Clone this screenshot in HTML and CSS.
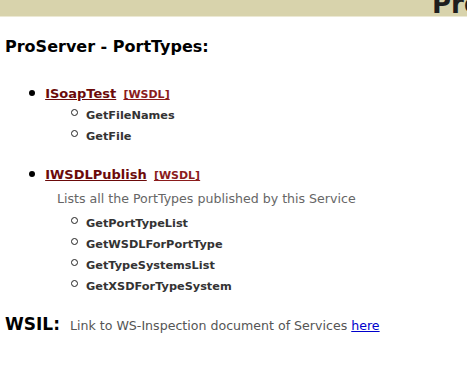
FILE: index.html
```html
<!DOCTYPE html>
<html lang="en">
<head>
    <meta charset="UTF-8">
    <title>ProServer - PortTypes</title>
    <link rel="stylesheet" href="styles.css">
</head>
<body>
    <header class="banner">
        <span class="banner-title">ProServer</span>
    </header>

    <main class="content">
        <h2 class="page-title">ProServer - PortTypes:</h2>

        <ul class="port-list">
            <li class="port">
                <a href="#" class="port-name">ISoapTest</a>
                <a href="#" class="wsdl-link">[WSDL]</a>
                <ul class="op-list">
                    <li>GetFileNames</li>
                    <li>GetFile</li>
                </ul>
            </li>
            <li class="port">
                <a href="#" class="port-name">IWSDLPublish</a>
                <a href="#" class="wsdl-link">[WSDL]</a>
                <div class="port-desc">Lists all the PortTypes published by this Service</div>
                <ul class="op-list">
                    <li>GetPortTypeList</li>
                    <li>GetWSDLForPortType</li>
                    <li>GetTypeSystemsList</li>
                    <li>GetXSDForTypeSystem</li>
                </ul>
            </li>
        </ul>

        <div class="wsil">
            <span class="wsil-label">WSIL:</span>
            <span class="wsil-text">Link to WS-Inspection document of Services <a href="#" class="wsil-link">here</a></span>
        </div>
    </main>
</body>
</html>
```

FILE: styles.css
```css
body {
    margin: 0;
    padding: 0;
    background-color: #ffffff;
    font-family: 'DejaVu Sans', Verdana, sans-serif;
    color: #333;
}

.banner {
    height: 16px;
    background-color: #d8d3ac;
    overflow: hidden;
    white-space: nowrap;
    padding-left: 432px;
    border-bottom: 1px solid #ece9d4;
}

.banner-title {
    display: block;
    font-size: 26px;
    font-weight: bold;
    color: #1e1e1e;
    line-height: 1;
    margin-top: -9px;
}

.content {
    padding: 0 5px;
}

.page-title {
    font-size: 16px;
    font-weight: bold;
    color: #000;
    margin: 21px 0 0 0;
    line-height: 18px;
}

.port-list {
    list-style: none;
    margin: 29px 0 0 0;
    padding-left: 40px;
}

.port {
    margin-bottom: 19px;
    font-size: 13px;
    line-height: 18px;
}

.port:last-child {
    margin-bottom: 17px;
}

.port::before {
    content: "";
    display: inline-block;
    width: 6px;
    height: 6px;
    border-radius: 50%;
    background-color: #000;
    margin-left: -16px;
    margin-right: 6px;
    vertical-align: 2px;
}

.port-name {
    color: #6b0a0a;
    font-weight: bold;
    font-size: 13px;
}

.wsdl-link {
    color: #8b1c1c;
    font-weight: bold;
    font-size: 11px;
    margin-left: 3px;
}

.port-desc {
    font-size: 12.6px;
    line-height: 15px;
    color: #666;
    margin: 6px 0 7px 12px;
}

.op-list {
    list-style: none;
    margin: 1px 0 0 0;
    padding-left: 41px;
}

.op-list li {
    font-size: 11.3px;
    font-weight: bold;
    color: #333;
    line-height: 21px;
}

.op-list li::before {
    content: "";
    display: inline-block;
    width: 5px;
    height: 5px;
    border: 1px solid #222;
    border-radius: 50%;
    margin-left: -15px;
    margin-right: 8px;
    vertical-align: 3px;
}

.wsil {
    display: flex;
    align-items: baseline;
    gap: 10px;
    line-height: 20px;
}

.wsil-label {
    font-size: 17px;
    font-weight: bold;
    color: #000;
}

.wsil-text {
    font-size: 12.6px;
    color: #555;
}

.wsil-link {
    color: #0000cc;
}
```
